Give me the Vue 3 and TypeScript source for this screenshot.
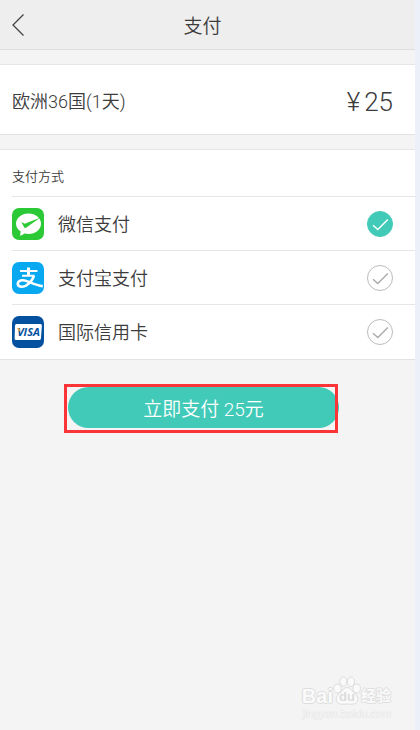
<script setup lang="ts">
import { ref } from 'vue'

type MethodId = 'wechat' | 'alipay' | 'card'

interface Method {
  id: MethodId
  label: string
}

const methods: Method[] = [
  { id: 'wechat', label: '微信支付' },
  { id: 'alipay', label: '支付宝支付' },
  { id: 'card', label: '国际信用卡' },
]

const selected = ref<MethodId>('wechat')
const price = 25
</script>

<template>
  <div class="page">
    <header class="bar">
      <button class="back" type="button" aria-label="返回">
        <svg width="14" height="24" viewBox="0 0 14 24" fill="none">
          <path d="M12.5 1.5 2 12 12.5 22.5" stroke="#444" stroke-width="1.3" />
        </svg>
      </button>
      <h1 class="title">支付</h1>
    </header>

    <main>
      <section class="panel order">
        <span class="product">欧洲36国(1天)</span>
        <span class="price"><span>¥</span>{{ price }}</span>
      </section>

      <section class="panel methods">
        <h2 class="heading">支付方式</h2>
        <label v-for="m in methods" :key="m.id" class="method">
          <svg v-if="m.id === 'wechat'" class="logo" viewBox="0 0 32 32">
            <rect width="32" height="32" rx="7" fill="#2cc936" />
            <path
              d="M16.5 5.5C9.500 5.500 4 10 4 15.700c0 3.200 1.800 5.900 4.600 7.600L8.200 28l4.500-2.600c1.200.3 2.500.5 3.800.5 7 0 12.500-4.500 12.500-10.200S23.500 5.500 16.500 5.500Z"
              fill="#fff"
            />
            <path d="M9.300 14 12.800 15.800 28.500 9.500 14 19.700c-.8.500-1.500.4-1.900-.4Z" fill="#2cc936" />
          </svg>
          <svg v-else-if="m.id === 'alipay'" class="logo" viewBox="0 0 32 32">
            <rect width="32" height="32" rx="7" fill="#08a9f1" />
            <g fill="none" stroke="#fff">
              <path d="M8 9H25.500M10 13.700H22.500" stroke-width="2" />
              <path d="M16.500 5.500V14" stroke-width="3" />
              <path
                d="M22 13.700C20.500 18 17.800 21 14.600 23.300c-3 2.100-8.800 2.200-8.800-1.500 0-3.500 4.600-4.500 9-2.700 4.600 1.700 9.500 4.100 16 5.200"
                stroke-width="2.6"
              />
            </g>
          </svg>
          <svg v-else class="logo" viewBox="0 0 32 32">
            <rect width="32" height="32" rx="7" fill="#04529f" />
            <path d="M4.500 8H28.500q1.500 0 1.400 1.500L28.900 22.500q-.2 1.500-1.600 1.500H4q-1.500 0-1.400-1.500L3 9.500Q3 8 4.500 8Z" fill="#fff" />
            <text class="visa" x="16.5" y="20.2" text-anchor="middle">VISA</text>
            <path d="M4.800 12.200H7.400L8.400 16Z" fill="#f2a42b" />
          </svg>
          <span class="name">{{ m.label }}</span>
          <span class="choice">
            <input v-model="selected" class="radio" type="radio" name="method" :value="m.id" />
            <svg class="tick" viewBox="0 0 26 26" fill="none">
              <path d="M6 14.200 10.800 18.500 20.800 8.500" stroke="currentColor" stroke-width="1.4" />
            </svg>
          </span>
        </label>
      </section>

      <div class="action">
        <button class="pay" type="button">立即支付 {{ price }}元</button>
        <span class="marker" aria-hidden="true"></span>
      </div>
    </main>

    <footer class="mark">
      <div class="brand">
        <span class="latin">Bai</span>
        <span class="paw">
          <svg width="28" height="30" viewBox="0 0 28 30" fill="#fafafa" stroke="#dcdcdc">
            <path d="M14 11.500c-3.500 0-4.500 3-6.500 5-2.500 2.300-5 4-4.200 7.700.8 4.400 5.200 4.300 10.700 3.800 5.500.5 9.900.6 10.700-3.800.8-3.700-1.700-5.400-4.200-7.700-2-2-3-5-6.500-5Z" />
            <ellipse cx="4.5" cy="12.5" rx="3.7" ry="4.5" />
            <ellipse cx="10.3" cy="5.5" rx="3.5" ry="4.7" />
            <ellipse cx="18" cy="5.8" rx="3.5" ry="4.7" />
            <ellipse cx="23.7" cy="12.5" rx="3.7" ry="4.5" />
          </svg>
          <span class="du">du</span>
        </span>
        <span class="han">经验</span>
      </div>
      <div class="site">jingyan.baidu.com</div>
    </footer>
  </div>
</template>

<style>
body {
  background: #ecf1f9;
}
</style>

<style scoped>
.page {
  box-sizing: border-box;
  min-height: 100vh;
  margin-right: 5px;
  display: flex;
  flex-direction: column;
  background: #f4f4f4;
  color: #3c3c3c;
  font-family: Roboto, 'Noto Sans CJK SC', sans-serif;
  font-weight: 350;
}

.page * {
  box-sizing: border-box;
}

.bar {
  display: grid;
  grid-template-columns: 40px 1fr 50px;
  align-items: center;
  height: 50px;
  background: #eee;
  border-bottom: 1px solid #dedede;
}

.back {
  display: flex;
  padding: 0 0 0 11px;
  border: 0;
  background: none;
}

.title {
  margin: 0;
  padding-top: 4px;
  text-align: center;
  font-size: 19px;
  line-height: 28px;
  font-weight: 350;
}

main {
  flex: 1;
}

.panel {
  margin-top: 14px;
  background: #fff;
  border-top: 1px solid #e6e6e6;
  border-bottom: 1px solid #e2e2e2;
}

.order {
  display: flex;
  align-items: center;
  justify-content: space-between;
  height: 71px;
  padding: 0 22px 0 12px;
}

.product {
  font-size: 18px;
}

.price {
  display: flex;
  gap: 4px;
  padding-top: 4px;
  font-size: 26px;
  line-height: 30px;
}

.heading {
  margin: 0;
  padding: 14px 12px 6px;
  font-size: 13px;
  line-height: 26px;
  font-weight: 350;
}

.method {
  display: flex;
  align-items: center;
  height: 54px;
  margin-left: 12px;
  padding-right: 22px;
  border-top: 1px solid #e6e6e6;
}

.method:last-child {
  height: 55px;
}

.logo {
  width: 32px;
  height: 32px;
}

.visa {
  font-family: 'Open Sans', sans-serif;
  font-size: 11px;
  font-style: italic;
  font-weight: 700;
  fill: #04529f;
}

.name {
  flex: 1;
  margin-left: 14px;
  padding-top: 2px;
  font-size: 18px;
  line-height: 26px;
}

.choice {
  position: relative;
  width: 26px;
  height: 26px;
  color: #aaa;
}

.radio {
  appearance: none;
  display: block;
  width: 26px;
  height: 26px;
  margin: 0;
  border: 1px solid #bbb;
  border-radius: 50%;
  background: #fff;
}

.radio:checked {
  border-color: #41cab8;
  background: #41cab8;
}

.tick {
  position: absolute;
  inset: 0;
  pointer-events: none;
}

.radio:checked + .tick {
  color: #fff;
}

.action {
  position: relative;
  margin: 24px 77px 0 64px;
  padding: 3px 0 5px 4px;
}

.pay {
  display: block;
  width: calc(100% + 1px);
  height: 41px;
  padding: 0;
  border: 0;
  border-radius: 21px;
  background: #41cab8;
  color: #fff;
  font: inherit;
  font-size: 19px;
}

.marker {
  position: absolute;
  inset: 0;
  border: 3px solid #fb3437;
  pointer-events: none;
}

.mark {
  align-self: flex-end;
  margin: 0 24px 10px 0;
  color: #fafafa;
  font-family: 'Liberation Sans', 'Noto Sans CJK SC', sans-serif;
  font-weight: 700;
  text-shadow: 0 1px #dedede, 0 -1px #dedede, 1px 0 #dedede, -1px 0 #dedede;
}

.brand {
  display: flex;
  align-items: flex-end;
  height: 30px;
}

.latin {
  font-size: 20px;
  line-height: 20px;
}

.paw {
  position: relative;
  height: 30px;
}

.du {
  position: absolute;
  left: 0;
  right: 0;
  bottom: 2px;
  text-align: center;
  font-size: 13px;
  line-height: 14px;
  color: #dcdcdc;
  text-shadow: none;
}

.han {
  font-size: 15px;
  line-height: 20px;
}

.site {
  font-size: 11px;
  line-height: 14px;
  font-weight: 400;
  color: #f4f4f4;
  text-shadow: 0 1px #e8e8e8, 1px 0 #e8e8e8;
}
</style>
